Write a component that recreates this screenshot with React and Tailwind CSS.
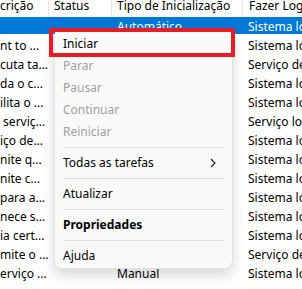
import React from "react";

const rows = [
  { d: "", t: "Automático", l: "Sistema local", sel: true },
  { d: "nt to ...", t: "Manual", l: "Sistema local" },
  { d: "cuta ta...", t: "Manual", l: "Serviço de rede" },
  { d: "da o c...", t: "Manual", l: "Sistema local" },
  { d: "ilita o ...", t: "Automático (Início Atrasado)", l: "Sistema local" },
  { d: "\u00a0serviç...", t: "Manual", l: "Serviço local" },
  { d: "iço de...", t: "Automático (Início Atrasado)", l: "Sistema local" },
  { d: "nite q...", t: "Manual", l: "Sistema local" },
  { d: "nite c...", t: "Manual", l: "Sistema local" },
  { d: "para a...", t: "Manual", l: "Sistema local" },
  { d: "nece s...", t: "Automático (Início Atrasado)", l: "Sistema local" },
  { d: "ia cert...", t: "Automático (Início Atrasado)", l: "Sistema local" },
  { d: "mite o ...", t: "Manual", l: "Serviço de rede" },
  { d: "erviço ...", t: "Manual", l: "Sistema local" },
];

function Item({ children, disabled, bold, arrow }) {
  return (
    <div
      className={
        "h-[22px] flex items-center pl-[8px] pr-[16px] " +
        (disabled ? "text-[#a0a0a0] " : "text-black ") +
        (bold ? "font-bold" : "")
      }
    >
      <span className="flex-1">{children}</span>
      {arrow && (
        <svg width="6" height="10" viewBox="0 0 6 10">
          <path d="M1 1 L5 5 L1 9" fill="none" stroke="#1a1a1a" strokeWidth="1.1" />
        </svg>
      )}
    </div>
  );
}

function Sep() {
  return <div className="mx-[8px] my-[4px] h-px bg-[#dedede]" />;
}

export default function App() {
  return (
    <div className="relative w-[302px] h-[289px] overflow-hidden bg-white text-[12px] text-black font-['Noto_Sans',sans-serif]">
      <div className="flex flex-col">
        <div className="grid grid-cols-[48px_63px_131px_1fr] h-[17px] leading-[12px] whitespace-nowrap">
          <div className="overflow-hidden">crição</div>
          <div className="border-l border-[#e5e5e5] pl-[5px] overflow-hidden">Status</div>
          <div className="border-l border-[#e5e5e5] pl-[5px] overflow-hidden">Tipo de Inicialização</div>
          <div className="border-l border-[#e5e5e5] pl-[6px] overflow-hidden">Fazer Logon</div>
        </div>
        {rows.map((r, i) => (
          <div
            key={i}
            className={
              "grid grid-cols-[48px_63px_131px_1fr] h-[19px] leading-[19px] whitespace-nowrap " +
              (r.sel
                ? "text-white bg-[linear-gradient(to_bottom,#0078d7_17px,transparent_17px)]"
                : "")
            }
          >
            <div className="overflow-hidden">{r.d}</div>
            <div className="overflow-hidden"></div>
            <div className="overflow-hidden text-ellipsis pl-[6px] pr-[6px]">{r.t}</div>
            <div className="overflow-hidden pl-[6px]">{r.l}</div>
          </div>
        ))}
      </div>

      <div className="absolute left-[54px] top-[28px] w-[179px] rounded-[8px] border border-[#e3e3e3] bg-[#f9f9f9] pt-[4px] pb-[1px] shadow-[0_6px_14px_rgba(0,0,0,0.16)]">
        <Item>Iniciar</Item>
        <Item disabled>Parar</Item>
        <Item disabled>Pausar</Item>
        <Item disabled>Continuar</Item>
        <Item disabled>Reiniciar</Item>
        <Sep />
        <Item arrow>Todas as tarefas</Item>
        <Sep />
        <Item>Atualizar</Item>
        <Sep />
        <Item bold>Propriedades</Item>
        <Sep />
        <Item>Ajuda</Item>
      </div>

      <div className="absolute left-[49px] top-[28px] w-[186px] h-[29px] border-[4px] border-[#e81c24]" />
    </div>
  );
}
